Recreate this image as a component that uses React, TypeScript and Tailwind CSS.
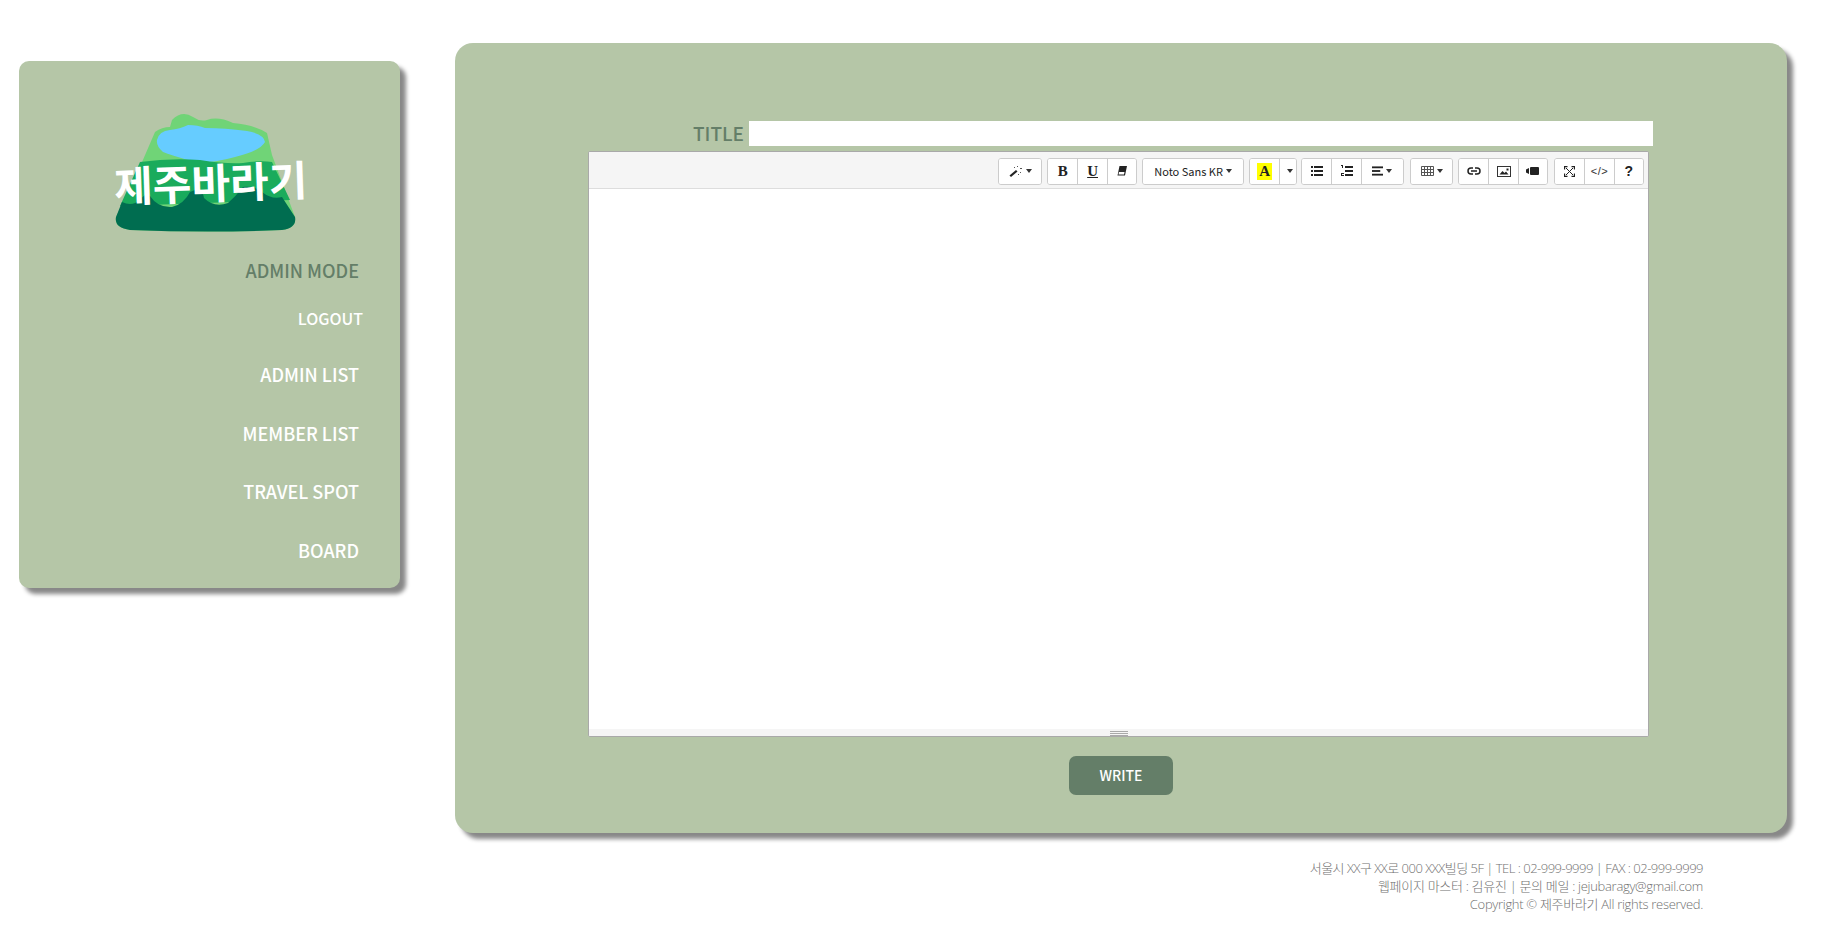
import type { ReactNode } from 'react'

const navItems = ['ADMIN LIST', 'MEMBER LIST', 'TRAVEL SPOT', 'BOARD']

function Caret() {
  return <span className="ml-[3px] inline-block h-0 w-0 border-x-[3px] border-t-[4px] border-x-transparent border-t-[#333]" />
}

function Btn({ w = 'w-[29.33px]', children }: { w?: string; children: ReactNode }) {
  return (
    <div className={`flex h-full ${w} items-center justify-center border-l border-[#ccc] bg-white text-[#222] first:border-l-0`}>
      {children}
    </div>
  )
}

function Group({ className = '', children }: { className?: string; children: ReactNode }) {
  return <div className={`flex h-[27px] overflow-hidden rounded-[3px] border border-[#ccc] bg-white ${className}`}>{children}</div>
}

function Logo() {
  return (
    <div className="relative h-[130px] w-[200px]">
      <svg viewBox="0 0 200 130" className="h-[130px] w-[200px]">
        <path
          d="M62 12 Q72 2 83 9 Q90 14 97 12 Q108 8 123 15 Q145 17 157 25 L162 47 L185 109 Q187 120 172 122 Q100 125 20 122 Q4 120 6 109 L23 75 L45 24 Q52 19 60 19 Z"
          fill="#70d477"
        />
        <path
          d="M47 32 Q49 23 60 22 Q70 21 78 17 Q88 17 95 20 Q115 20 137 23 Q154 26 155 34 Q150 43 125 49 Q100 56 85 54 Q60 47 53 44 Q46 38 47 32 Z"
          fill="#66ccff"
        />
        <path d="M30 54 Q60 50 90 52 Q115 56 133 55 Q150 52 162 54 L180 92 L10 98 Z" fill="#1aab5c" />
        <path
          d="M12 94 Q22 99 30 92 Q36 84 40 88 Q48 100 62 99 Q74 96 80 84 Q92 78 94 90 Q104 100 118 95 Q126 88 133 79 Q146 78 152 84 Q162 92 172 89 L185 109 Q187 120 172 122 Q100 125 20 122 Q4 120 6 109 Z"
          fill="#006d50"
        />
      </svg>
      <div className="absolute left-[4px] top-[45px] -rotate-2 whitespace-nowrap font-['Noto_Sans_CJK_KR',sans-serif] text-[42px] font-bold leading-[56px] text-white">
        제주바라기
      </div>
    </div>
  )
}

function Sidebar() {
  return (
    <aside className="mt-[61px] flex h-[527px] w-[381px] shrink-0 flex-col rounded-[10px] bg-[#b5c6a7] shadow-[6px_6px_4px_#888]">
      <div className="mt-[47px] ml-[91px]">
        <Logo />
      </div>
      <div className="mt-[17px] flex flex-col items-end text-right font-['Noto_Sans_CJK_KR',sans-serif] font-medium">
        <div className="mr-[41px] h-[30px] text-[18px] leading-[30px] text-[#647e68]">ADMIN MODE</div>
        <div className="mt-[18px] mr-[37px] h-[30px] text-[16px] leading-[30px] text-white">LOGOUT</div>
        {navItems.map((item, i) => (
          <div key={item} className={`mr-[41px] h-[30px] text-[18px] leading-[30px] text-white ${i === 0 ? 'mt-[26px]' : 'mt-[28.5px]'}`}>
            {item}
          </div>
        ))}
      </div>
    </aside>
  )
}

function Toolbar() {
  return (
    <div className="flex h-[37px] items-center justify-end gap-[5px] border-b border-[#ddd] bg-[#f5f5f5] pt-[2px] pr-[4px]">
      <Group>
        <Btn w="w-[42px]">
          <svg viewBox="0 0 14 12" className="h-[12px] w-[14px]" fill="#222">
            <path d="M0.5 10.5 L7 5 L8.5 6.5 L2 12 Z" />
            <path d="M8 1h1v1H8zM5 2h1v1H5zM11 3h2v1h-2zM11 7h1v1h-1zM9 9h1v1H9z" fill="#555" />
          </svg>
          <Caret />
        </Btn>
      </Group>
      <Group>
        <Btn><span className="font-['Liberation_Serif',serif] text-[15px] font-bold">B</span></Btn>
        <Btn><span className="font-['Liberation_Serif',serif] text-[15px] font-bold underline">U</span></Btn>
        <Btn>
          <svg viewBox="0 0 12 10" className="h-[10px] w-[12px]" fill="#222">
            <path d="M3.5 0 H11 L9 9.5 H1.5 Z M3 6 L2.5 8.5 H8 L8.5 6 Z" fillRule="evenodd" />
          </svg>
        </Btn>
      </Group>
      <Group>
        <Btn w="w-[100px]">
          <span className="font-['Noto_Sans_CJK_KR',sans-serif] text-[11px] leading-none">Noto Sans KR</span>
          <Caret />
        </Btn>
      </Group>
      <Group>
        <Btn>
          <span className="bg-[#ffff00] px-[2px] font-['Liberation_Serif',serif] text-[15px] leading-[17px] font-bold">A</span>
        </Btn>
        <Btn w="w-[16.67px]"><Caret /></Btn>
      </Group>
      <Group className="-ml-[1px]">
        <Btn>
          <svg viewBox="0 0 12 10" className="h-[10px] w-[12px]" fill="#222">
            <path d="M0 0h2v2H0zM0 4h2v2H0zM0 8h2v2H0zM3 0h9v2H3zM3 4h9v2H3zM3 8h9v2H3z" />
          </svg>
        </Btn>
        <Btn>
          <svg viewBox="0 0 12 12" className="h-[12px] w-[12px]" fill="#222">
            <path d="M4 1h8v2H4zM4 5h8v2H4zM4 9h8v2H4zM0 0h2v3H1V1H0zM0 8h3v1H1v1h2v1H0V8z" />
          </svg>
        </Btn>
        <Btn w="w-[42.33px]">
          <svg viewBox="0 0 12 10" className="h-[10px] w-[11px]" fill="#222">
            <rect x="0" y="0" width="12" height="2" />
            <rect x="0" y="4" width="9" height="2" />
            <rect x="0" y="8" width="12" height="2" />
          </svg>
          <Caret />
        </Btn>
      </Group>
      <Group className="ml-[1px]">
        <Btn w="w-[41px]">
          <svg viewBox="0 0 13 10" className="h-[10px] w-[13px]" fill="none" stroke="#555" strokeWidth="1">
            <path d="M0.5 0.5h12v9h-12zM0.5 3.5h12M0.5 6.5h12M3.5 0.5v9M6.5 0.5v9M9.5 0.5v9" />
          </svg>
          <Caret />
        </Btn>
      </Group>
      <Group>
        <Btn>
          <svg viewBox="0 0 14 8" className="h-[8px] w-[14px]" fill="none" stroke="#222" strokeWidth="1.5">
            <path d="M6 1H4a3 3 0 0 0 0 6h2M8 1h2a3 3 0 0 1 0 6H8M4 4h6" />
          </svg>
        </Btn>
        <Btn>
          <svg viewBox="0 0 14 11" className="h-[11px] w-[14px]">
            <rect x="0.5" y="0.5" width="13" height="10" fill="none" stroke="#333" />
            <path d="M2.5 8.5 L5.5 5 L7.5 7 L9 5.5 L11.5 8.5 Z" fill="#222" />
            <rect x="9.5" y="2.5" width="2" height="2" fill="#222" />
          </svg>
        </Btn>
        <Btn>
          <svg viewBox="0 0 13 8" className="h-[8px] w-[13px]" fill="#222">
            <path d="M0 2.5 L3 1 V7 L0 5.5 Z" />
            <rect x="4" y="0" width="9" height="8" rx="1" />
          </svg>
        </Btn>
      </Group>
      <Group className="ml-[1px]">
        <Btn>
          <svg viewBox="0 0 11 11" className="h-[11px] w-[11px]" fill="none" stroke="#222" strokeWidth="1">
            <path d="M2 2l7 7M9 2L2 9" />
            <path d="M0.5 3.5v-3h3M7.5 0.5h3v3M10.5 7.5v3h-3M3.5 10.5h-3v-3" strokeWidth="1.3" />
          </svg>
        </Btn>
        <Btn>
          <span className="font-['Liberation_Sans',sans-serif] text-[11px] tracking-[0.5px] text-[#333]">&lt;/&gt;</span>
        </Btn>
        <Btn><span className="font-['Liberation_Sans',sans-serif] text-[14px] font-bold">?</span></Btn>
      </Group>
    </div>
  )
}

function Editor() {
  return (
    <div className="mt-[5px] ml-[133px] flex h-[586px] w-[1061px] flex-col overflow-hidden rounded-[2px] border border-[#a9a9a9] bg-white">
      <Toolbar />
      <div className="flex-1" />
      <div className="flex h-[7px] flex-col items-center gap-[1px] bg-[#f5f5f5] pt-[2px]">
        <div className="h-px w-[18px] bg-[#a9a9a9]" />
        <div className="h-px w-[18px] bg-[#a9a9a9]" />
        <div className="h-px w-[18px] bg-[#a9a9a9]" />
      </div>
    </div>
  )
}

export default function App() {
  return (
    <div className="h-[928px] w-[1836px] overflow-hidden bg-white pl-[19px]">
      <div className="flex items-start gap-[55px]">
        <Sidebar />
        <div className="w-[1332px]">
          <main className="mt-[43px] h-[790px] rounded-[18px] bg-[#b5c6a7] pt-[78px] shadow-[6px_6px_4px_#888]">
            <div className="flex h-[25px] items-center">
              <label className="mb-[2px] ml-[233px] w-[56px] text-right font-['Noto_Sans_CJK_KR',sans-serif] text-[19px] leading-[23px] font-medium text-[#647e68]">
                TITLE
              </label>
              <input className="ml-[5px] h-[25px] w-[904px] bg-white" />
            </div>
            <Editor />
            <div className="mt-[19px] flex justify-center">
              <button className="h-[39px] w-[104px] rounded-[7px] bg-[#647e68] font-['Noto_Sans_CJK_KR',sans-serif] text-[14px] font-medium text-white">
                WRITE
              </button>
            </div>
          </main>
          <footer className="mt-[26px] mr-[84px] text-right font-['Open_Sans','Noto_Sans_CJK_KR',sans-serif] text-[13px] leading-[18px] font-light tracking-[-0.3px] text-[#707070]">
            <div className="tracking-[-0.5px]">서울시 XX구 XX로 000 XXX빌딩 5F | TEL : 02-999-9999 | FAX : 02-999-9999</div>
            <div>웹페이지 마스터 : 김유진 | 문의 메일 : jejubaragy@gmail.com</div>
            <div>Copyright © 제주바라기 All rights reserved.</div>
          </footer>
        </div>
      </div>
    </div>
  )
}
